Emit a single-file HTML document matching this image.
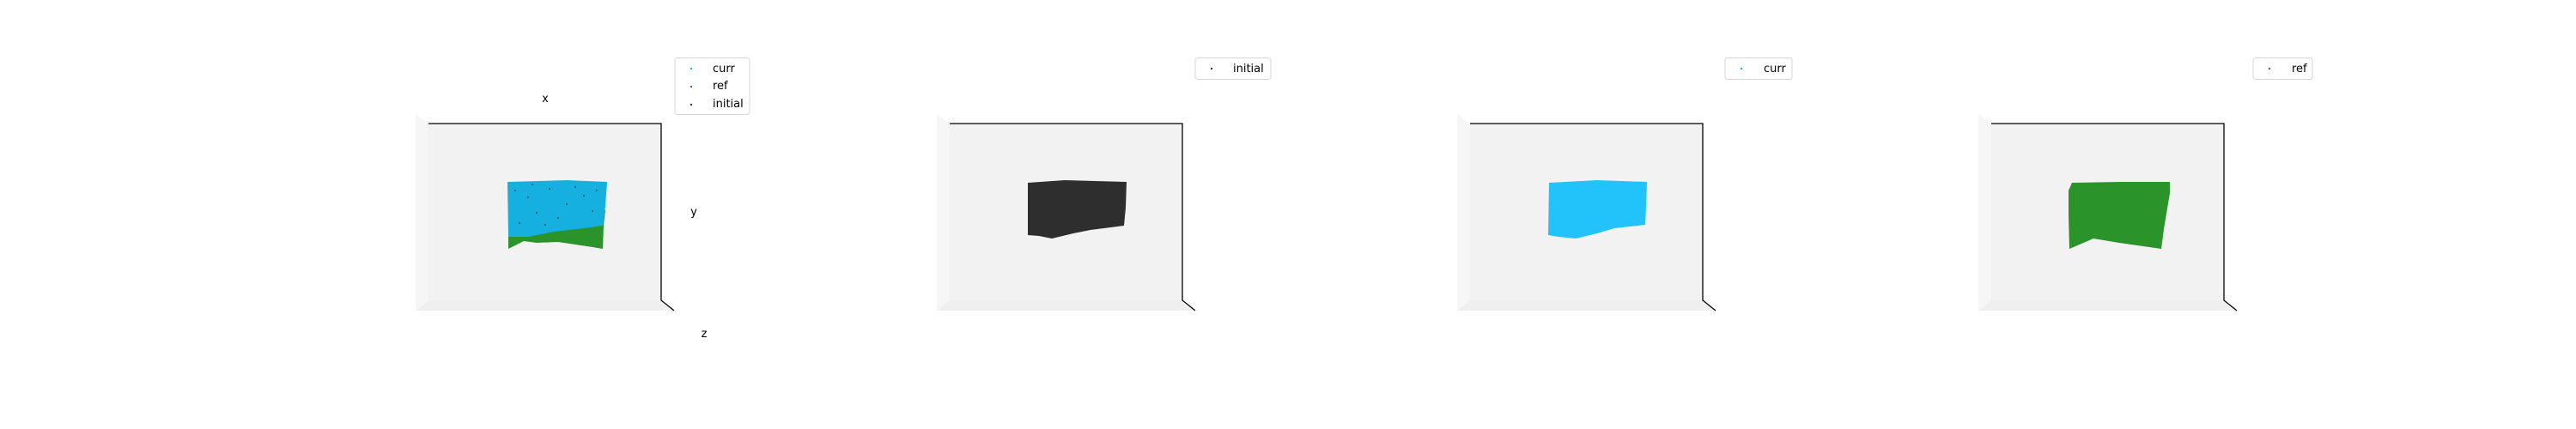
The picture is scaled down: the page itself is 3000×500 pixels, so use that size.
<!DOCTYPE html>
<html><head><meta charset="utf-8"><style>
html,body{margin:0;padding:0;background:#fff;width:3000px;height:500px;overflow:hidden}
svg{display:block}
text{font-family:"DejaVu Sans","Liberation Sans",sans-serif;font-size:13px;fill:#000}
</style></head><body>
<svg width="3000" height="500" viewBox="0 0 3000 500">
<defs>
<g id="box">
<polygon points="0,-11 15,0 15,206 0,218" fill="#f6f6f6"/>
<polygon points="15,206 286,206 301,218 0,218" fill="#efefef"/>
<rect x="15" y="0" width="271" height="206" fill="#f2f2f2"/>
<polyline points="15,0 286,0 286,206 301,218" fill="none" stroke="#000" stroke-width="1.3"/>
</g>
</defs>

<!-- Panel 1 -->
<use href="#box" x="484" y="144"/>
<polygon points="592,262 705,245 703,262 702,290 690,288 650,282 625,283 610,281 592,290" fill="#2a932a"/>
<polygon points="591,212 660,210 707,212 705,240 702,263 680,266 645,270 615,276 592,276" fill="#16b0e0"/>
<g fill="#111" opacity="0.6">
<circle cx="600" cy="222" r="1"/><circle cx="615" cy="230" r="1"/><circle cx="640" cy="220" r="1"/><circle cx="660" cy="238" r="1"/><circle cx="680" cy="228" r="1"/><circle cx="625" cy="248" r="1"/><circle cx="650" cy="254" r="1"/><circle cx="690" cy="246" r="1"/><circle cx="605" cy="260" r="1"/><circle cx="670" cy="218" r="1"/><circle cx="620" cy="215" r="1"/><circle cx="695" cy="222" r="1"/><circle cx="635" cy="262" r="1"/>
</g>
<text x="635" y="119" text-anchor="middle">x</text>
<text x="808" y="251" text-anchor="middle">y</text>
<text x="820" y="393" text-anchor="middle">z</text>
<rect x="786" y="67.5" width="87" height="66" rx="3" fill="#fff" stroke="#d6d6d6"/>
<circle cx="805" cy="80" r="1.2" fill="#00bfff"/>
<circle cx="805" cy="101" r="1.2" fill="#228b22"/>
<circle cx="805" cy="122" r="1.2" fill="#333"/>
<text x="830" y="84">curr</text>
<text x="830" y="104">ref</text>
<text x="830" y="125">initial</text>

<!-- Panel 2 -->
<use href="#box" x="1091" y="144"/>
<polygon points="1197,213 1240,210 1312,212 1311,242 1309,263 1270,268 1250,272 1225,278 1210,275 1197,274" fill="#2e2e2e"/>

<rect x="1392" y="67.5" width="88" height="25" rx="3" fill="#fff" stroke="#d6d6d6"/>
<circle cx="1411" cy="80" r="1.2" fill="#333"/>
<text x="1436" y="84">initial</text>

<!-- Panel 3 -->
<use href="#box" x="1697" y="144"/>
<polygon points="1804,213 1860,210 1918,212 1917,240 1916,262 1880,266 1860,272 1835,278 1815,276 1803,274" fill="#22c3fb"/>
<rect x="2009" y="67.5" width="78" height="25" rx="3" fill="#fff" stroke="#d6d6d6"/>
<circle cx="2028" cy="80" r="1.2" fill="#00bfff"/>
<text x="2054" y="84">curr</text>

<!-- Panel 4 -->
<use href="#box" x="2304" y="144"/>
<polygon points="2413,213 2470,212 2527,212 2527,225 2520,267 2517,290 2468,283 2438,278 2410,290 2409,250 2409,222" fill="#2a932a"/>
<rect x="2624" y="67.5" width="69" height="25" rx="3" fill="#fff" stroke="#d6d6d6"/>
<circle cx="2643" cy="80" r="1.2" fill="#228b22"/>
<text x="2669" y="84">ref</text>
</svg>
</body></html>
